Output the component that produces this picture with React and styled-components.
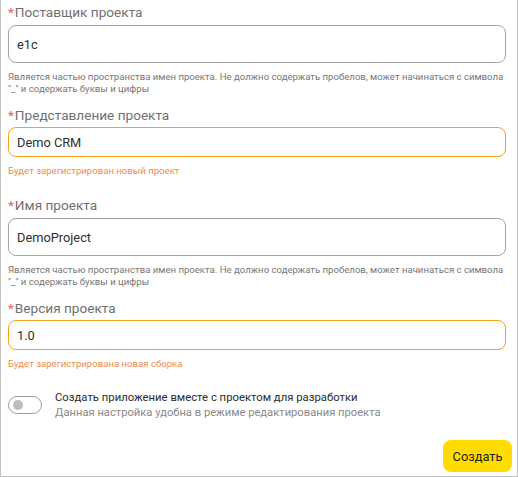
import React from "react";
import styled, { createGlobalStyle } from "styled-components";

const GlobalStyle = createGlobalStyle`
  html, body {
    margin: 0;
    padding: 0;
    background: #ffffff;
  }
  * {
    box-sizing: border-box;
  }
`;

const Panel = styled.div`
  width: 518px;
  height: 477px;
  display: flex;
  flex-direction: column;
  border: 1px solid #c2c2c2;
  border-top: none;
  background: #fff;
  font-family: Roboto, "Liberation Sans", Arial, sans-serif;
`;

const Form = styled.div`
  display: flex;
  flex-direction: column;
  padding: 4px 11px 0 7px;
`;

const Field = styled.div`
  display: flex;
  flex-direction: column;
`;

const Label = styled.label`
  font-size: 13.6px;
  line-height: 16px;
  color: #707070;
  margin-bottom: ${(p) => (p.$tight ? 4 : 5)}px;
`;

const Star = styled.span`
  color: #e8625a;
  margin-right: 1px;
`;

const Input = styled.input`
  display: block;
  width: 100%;
  height: ${(p) => (p.$warn ? 30 : 38)}px;
  padding: 0 8px;
  border: 1px solid ${(p) => (p.$warn ? "#f5a21c" : "#a3a3a3")};
  border-radius: 8px;
  font-family: Roboto, "Liberation Sans", Arial, sans-serif;
  font-size: 12.8px;
  color: #2f2f2f;
  background: #fff;
  outline: none;
`;

const Helper = styled.div`
  margin-top: 8px;
  padding-bottom: ${(p) => (p.$tone === "error" ? 20 : 12)}px;
  font-size: 9.6px;
  line-height: 12px;
  white-space: nowrap;
  color: ${(p) => (p.$tone === "error" ? "#f28a4e" : "#767676")};
`;

const HelperLine = styled.div``;

const ToggleRow = styled.div`
  display: flex;
  align-items: center;
  gap: 13px;
`;

const Switch = styled.div`
  position: relative;
  flex: none;
  width: 34px;
  height: 18px;
  border: 1px solid #9e9e9e;
  border-radius: 9px;
  background: #fff;

  &::after {
    content: "";
    position: absolute;
    left: 4px;
    top: 3px;
    width: 10px;
    height: 10px;
    border-radius: 50%;
    background: #bdbdbd;
  }
`;

const ToggleText = styled.div`
  display: flex;
  flex-direction: column;
`;

const ToggleTitle = styled.div`
  font-size: 11.3px;
  line-height: 15px;
  color: #2b2b2b;
`;

const ToggleSub = styled.div`
  font-size: 11.2px;
  line-height: 15px;
  color: #8a8a8a;
`;

const Footer = styled.div`
  margin-top: auto;
  display: flex;
  justify-content: flex-end;
  padding: 0 5px 4px 0;
`;

const PrimaryButton = styled.button`
  width: 69px;
  height: 32px;
  border: none;
  border-radius: 8px;
  background: #ffdb00;
  color: #222;
  font-family: Roboto, "Liberation Sans", Arial, sans-serif;
  font-size: 12.8px;
  cursor: pointer;
`;

const HINT = [
  "Является частью пространства имен проекта. Не должно содержать пробелов, может начинаться с символа",
  "\"_\" и содержать буквы и цифры",
];

const fields = [
  { label: "Поставщик проекта", value: "e1c", hint: HINT, tone: "hint" },
  {
    label: "Представление проекта",
    value: "Demo CRM",
    hint: ["Будет зарегистрирован новый проект"],
    tone: "error",
  },
  { label: "Имя проекта", value: "DemoProject", hint: HINT, tone: "hint" },
  {
    label: "Версия проекта",
    value: "1.0",
    hint: ["Будет зарегистрирована новая сборка"],
    tone: "error",
  },
];

export default function App() {
  return (
    <>
      <GlobalStyle />
      <Panel>
        <Form>
          {fields.map((f) => {
            const warn = f.tone === "error";
            return (
              <Field key={f.label}>
                <Label $tight={warn}>
                  <Star>*</Star>
                  {f.label}
                </Label>
                <Input $warn={warn} defaultValue={f.value} readOnly />
                <Helper $tone={f.tone}>
                  {f.hint.map((line) => (
                    <HelperLine key={line}>{line}</HelperLine>
                  ))}
                </Helper>
              </Field>
            );
          })}
          <ToggleRow>
            <Switch />
            <ToggleText>
              <ToggleTitle>Создать приложение вместе с проектом для разработки</ToggleTitle>
              <ToggleSub>Данная настройка удобна в режиме редактирования проекта</ToggleSub>
            </ToggleText>
          </ToggleRow>
        </Form>
        <Footer>
          <PrimaryButton>Создать</PrimaryButton>
        </Footer>
      </Panel>
    </>
  );
}
